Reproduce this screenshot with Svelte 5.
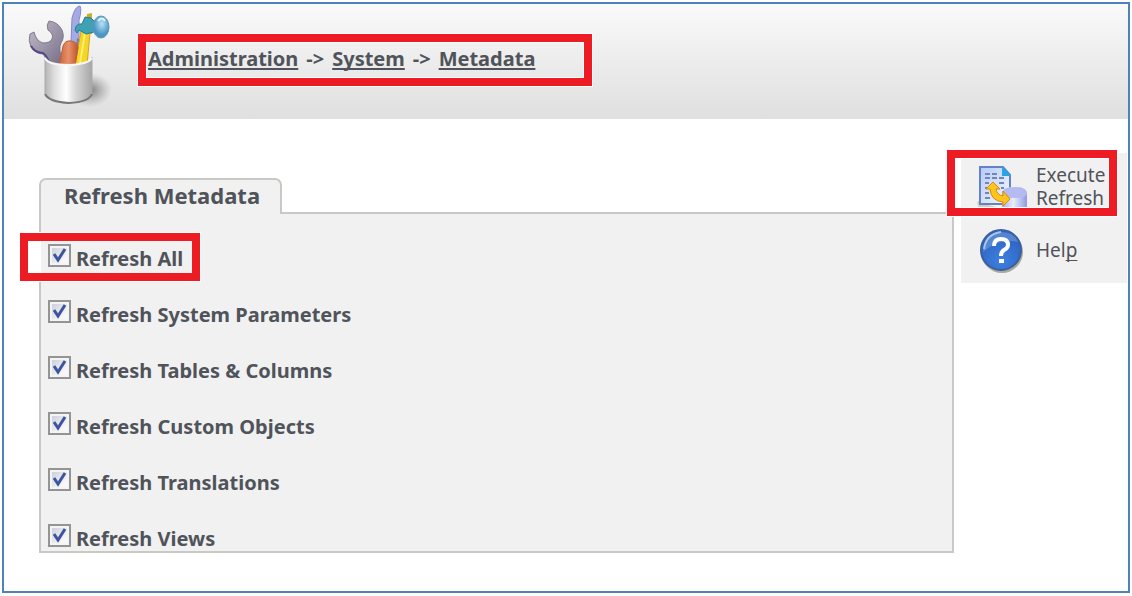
<!--
  App.svelte - Refresh Metadata page of the administration console
-->
<script>
  let options = $state([
    { id: 'all', label: 'Refresh All', checked: true, marked: true },
    { id: 'params', label: 'Refresh System Parameters', checked: true },
    { id: 'tables', label: 'Refresh Tables & Columns', checked: true },
    { id: 'objects', label: 'Refresh Custom Objects', checked: true },
    { id: 'translations', label: 'Refresh Translations', checked: true },
    { id: 'views', label: 'Refresh Views', checked: true }
  ])
</script>

<div class="page">
  <div class="window">
    <header>
      <svg class="tools" viewBox="24 4 90 104" aria-hidden="true">
        <defs>
          <linearGradient id="cup">
            <stop offset="0" stop-color="#b4b4b4" />
            <stop offset="0.2" stop-color="#dedede" />
            <stop offset="0.45" stop-color="#ffffff" />
            <stop offset="0.65" stop-color="#d8d8d8" />
            <stop offset="1" stop-color="#a6a6a6" />
          </linearGradient>
          <linearGradient id="wrench" x2="1" y2="1">
            <stop offset="0" stop-color="#c4becb" />
            <stop offset="1" stop-color="#766d86" />
          </linearGradient>
          <linearGradient id="handle">
            <stop offset="0" stop-color="#c8643c" />
            <stop offset="0.5" stop-color="#ea9068" />
            <stop offset="1" stop-color="#b9552f" />
          </linearGradient>
          <radialGradient id="ball" cx="0.55" cy="0.35">
            <stop offset="0" stop-color="#b9e2f4" />
            <stop offset="1" stop-color="#4a95c4" />
          </radialGradient>
          <radialGradient id="shade">
            <stop offset="0" stop-color="#555" stop-opacity="0.75" />
            <stop offset="1" stop-color="#888" stop-opacity="0" />
          </radialGradient>
        </defs>
        <ellipse cx="90" cy="90" rx="22" ry="17" fill="url(#shade)" />
        <path d="M71 42L72 18Q75 6 80 6Q82 10 79 20L79 60H71Z" fill="#a5aae6" stroke="#8589c4" />
        <path d="M77 38L83 42V60H75Z" fill="#777bb0" />
        <path d="M49 21Q58 22 62 30Q65 37 61 43Q58 48 63 64H48Q46 57 43 54Q36 54 31 47Q28 40 30 34L34 32Q36 41 43 43Q50 43 52 39Q54 34 48 30Q46 25 49 21Z" fill="url(#wrench)" stroke="#81798f" />
        <path d="M31 46Q35 53 43 53Q47 56 49 62" fill="none" stroke="#544a83" stroke-width="2" />
        <path d="M81 31L90 33L87 65H75Z" fill="#f6d525" stroke="#cfa528" />
        <path d="M85 33L80 63" stroke="#fff071" stroke-width="2" />
        <path d="M87 14L92 13L92 34H86Z" fill="#cfad2b" />
        <path d="M75 30Q76 23 82 24L85 17L91 18L96 23L94 32L86 34L79 30L77 33Z" fill="#3fa2b4" stroke="#287b91" />
        <ellipse cx="101" cy="27" rx="8" ry="11" fill="url(#ball)" stroke="#5a97b9" />
        <path d="M98 21Q102 16 105 21" fill="none" stroke="#e0f5fb" stroke-width="2" />
        <path d="M59 66L63 46Q65 40 71 41Q78 42 78 48L75 66Z" fill="url(#handle)" stroke="#b9603f" />
        <path d="M45 57Q47 64 60 65H77Q88 64 92 57V94Q89 102 69 103Q49 102 45 94Z" fill="url(#cup)" />
        <path d="M45 94Q49 102 69 103Q89 102 92 94" fill="none" stroke="#777" stroke-width="2" />
        <path d="M45 57V94M92 57V94" stroke="#aaa" />
        <path d="M45 58Q48 65 69 65Q89 64 92 58" fill="none" stroke="#f7f7f7" stroke-width="2" />
      </svg>
      <nav aria-label="Breadcrumb">
        <a href="#administration">Administration</a>
        <span>-&gt;</span>
        <a href="#system">System</a>
        <span>-&gt;</span>
        <a href="#metadata">Metadata</a>
      </nav>
    </header>

    <div class="content">
      <main>
        <h1>Refresh Metadata</h1>
        <div class="panel">
          {#each options as option (option.id)}
            <div class="option" class:framed={option.marked}>
              <span class="box">
                <input type="checkbox" id={option.id} bind:checked={option.checked} />
                {#if option.checked}
                  <svg viewBox="0 0 23 23" aria-hidden="true">
                    <path d="M6 10L10 16L17 5" fill="none" stroke="#3d54a0" stroke-width="3" />
                  </svg>
                {/if}
              </span>
              <label for={option.id}>{option.label}</label>
            </div>
          {/each}
        </div>
      </main>

      <aside>
        <button type="button" class="execute">
          <svg viewBox="0 0 50 46" aria-hidden="true">
            <defs>
              <linearGradient id="paper" x2="1" y2="1">
                <stop offset="0" stop-color="#b5c9f8" />
                <stop offset="1" stop-color="#f5f9ff" />
              </linearGradient>
              <linearGradient id="drum">
                <stop offset="0" stop-color="#a3ade8" />
                <stop offset="0.45" stop-color="#eaeeff" />
                <stop offset="1" stop-color="#8f9ae0" />
              </linearGradient>
            </defs>
            <path d="M0 38Q4 34 8 40L26 45H2Z" fill="#d2d0bd" />
            <path d="M3 3H26L33 11V40H3Z" fill="url(#paper)" stroke="#6583c4" stroke-width="2" />
            <path d="M25 2V12H34Z" fill="#28a5e5" />
            <path d="M8 10H13M15 10H20M8 14H13M15 14H20M22 14H27M8 19H12M22 19H27M8 24H11M24 24H27M8 29H12M8 34H13" stroke="#7286b5" stroke-width="2" />
            <path d="M25 30Q25 23 38 23Q50 23 50 30V46H25Z" fill="url(#drum)" />
            <path d="M25 30Q25 23 38 23Q50 23 50 30Q48 34 38 34Q27 34 25 30Z" fill="#b3bbf0" />
            <path d="M16 18L23 25H19Q20 31 26 32V27L33 35L26 42V38Q14 37 13 25H9Z" fill="#ffc51d" stroke="#d58b0b" stroke-linejoin="round" />
          </svg>
          <span>Execute<br />Refresh</span>
        </button>
        <button type="button" class="help">
          <svg viewBox="0 0 50 46" aria-hidden="true">
            <defs>
              <radialGradient id="disc" cx="0.5" cy="0.75" r="0.7">
                <stop offset="0" stop-color="#3f80de" />
                <stop offset="1" stop-color="#2b62c2" />
              </radialGradient>
            </defs>
            <circle cx="25" cy="25" r="21" fill="#aaa99c" />
            <circle cx="24" cy="23" r="20" fill="url(#disc)" stroke="#3b609f" stroke-width="2" />
            <path d="M6 25Q8 7 25 5Q37 5 41 15Q23 10 6 25Z" fill="#fff" opacity="0.2" />
            <path d="M7 22Q9 7 24 5" fill="none" stroke="#a5c6f3" stroke-width="2" />
            <path d="M17 19Q17 12 24 12Q31 12 31 18Q31 21 27 23Q24 25 24 29" fill="none" stroke="#fff" stroke-width="4" />
            <rect x="22" y="32" width="5" height="4" fill="#fff" />
          </svg>
          <span>Hel<u>p</u></span>
        </button>
      </aside>
    </div>
  </div>
</div>

<style>
  :global(body) {
    margin: 0;
    background: #fff;
  }

  .page {
    box-sizing: border-box;
    display: flex;
    min-height: 100vh;
    padding: 2px 2px 3px;
    font-family: 'Noto Sans', 'Open Sans', sans-serif;
    font-size: 20px;
    color: #50545a;
  }

  .window {
    flex: 1;
    border: 2px solid #4f81bd;
  }

  header {
    display: flex;
    align-items: flex-start;
    height: 115px;
    padding-left: 20px;
    background: linear-gradient(#fafafa, #dfdfdf);
  }

  .tools {
    width: 90px;
    height: 104px;
  }

  nav {
    box-sizing: border-box;
    display: flex;
    gap: 8px;
    width: 454px;
    margin: 30px 0 0 24px;
    padding: 3px 2px 5px;
    border: 8px solid #ed1c24;
    outline: 1px solid #fff;
    box-shadow: inset 0 0 0 1px #fff;
    font-weight: 700;
    line-height: 28px;
    white-space: nowrap;
  }

  a {
    color: inherit;
    text-decoration-thickness: 2px;
    text-decoration-skip-ink: none;
    text-underline-offset: 2px;
  }

  .content {
    display: flex;
    align-items: flex-start;
    gap: 7px;
    padding: 34px 1px 0 35px;
  }

  main {
    flex: 1;
    margin-top: 25px;
  }

  h1 {
    position: relative;
    box-sizing: border-box;
    width: fit-content;
    margin: 0 0 -2px;
    padding: 1px 20px 5px 23px;
    border: 2px solid #c8c8c4;
    border-bottom: 0;
    border-radius: 7px 7px 0 0;
    background: #f1f1f1;
    font-size: 22px;
    font-weight: 700;
    line-height: 28px;
  }

  .panel {
    display: flex;
    flex-direction: column;
    align-items: flex-start;
    gap: 29px;
    padding: 30px 7px 0;
    border: 2px solid #c8c8c4;
    background: #f1f1f1;
  }

  .option {
    position: relative;
    display: flex;
    align-items: flex-start;
    gap: 5px;
  }

  .framed::after {
    content: '';
    position: absolute;
    inset: -11px -17px -10px -28px;
    border: 8px solid #ed1c24;
    outline: 1px solid #fff;
    pointer-events: none;
  }

  /* hides the panel edge inside the frame */
  .framed::before {
    content: '';
    position: absolute;
    top: -3px;
    bottom: -2px;
    left: -20px;
    width: 13px;
    background: #fff;
  }

  .box {
    display: grid;
  }

  .box > * {
    grid-area: 1 / 1;
    width: 23px;
    height: 23px;
  }

  .box svg {
    pointer-events: none;
  }

  input {
    box-sizing: border-box;
    margin: 0;
    appearance: none;
    border: 2px solid #949494;
    background: linear-gradient(135deg, #c4cad4, #f8f8f8 75%);
    box-shadow: inset 0 0 0 2px #f4f4f4;
  }

  label {
    padding-top: 3px;
    font-weight: 700;
    line-height: 24px;
  }

  aside {
    display: flex;
    flex-direction: column;
    width: 166px;
    height: 130px;
    background: #f1f1f1;
  }

  button {
    position: relative;
    display: flex;
    align-items: center;
    gap: 9px;
    padding: 0 0 0 16px;
    border: 0;
    background: none;
    color: inherit;
    font: inherit;
    font-size: 19px;
    line-height: 23px;
    text-align: left;
    cursor: pointer;
  }

  button svg {
    width: 50px;
    height: 46px;
  }

  .execute {
    padding-top: 11px;
  }

  .execute::after {
    content: '';
    position: absolute;
    inset: -3px 10px -6px -14px;
    border: 8px solid #ed1c24;
    outline: 1px solid #fff;
    box-shadow: inset 0 0 0 1px #fff;
  }

  .help {
    margin-top: 17px;
  }

  u {
    text-decoration-skip-ink: none;
    text-underline-offset: 3px;
  }
</style>
